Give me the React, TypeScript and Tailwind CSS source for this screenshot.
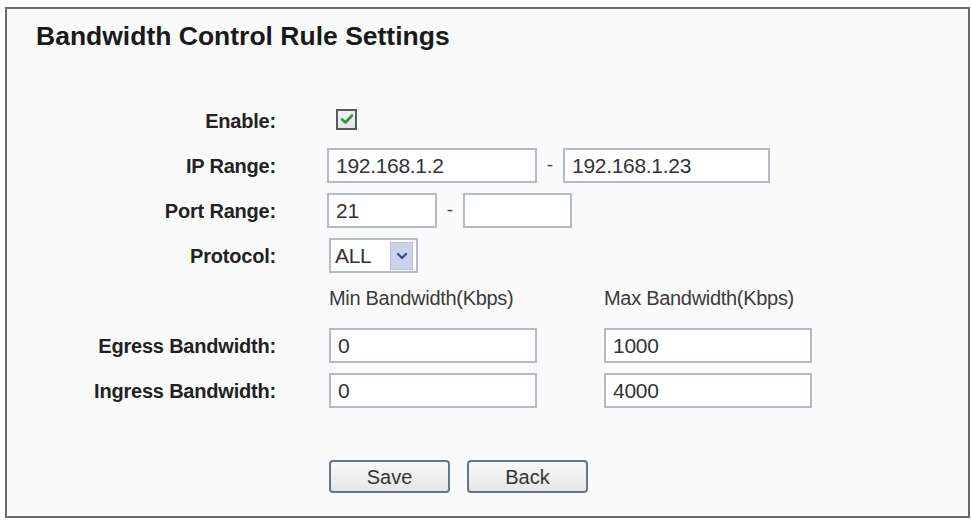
const font = { fontFamily: '"Liberation Sans", Arial, sans-serif' };

const Field = ({ value, width }: { value: string; width: string }) => (
  <div className={`${width} h-[35px] border-2 border-[#b3bbc6] bg-white flex items-center pl-[7px] text-[21px] text-[#333] tracking-[-0.3px]`}>
    {value}
  </div>
);

const Label = ({ children }: { children: string }) => (
  <div className="w-[269px] shrink-0 text-right text-[20px] font-bold text-[#222] tracking-[-0.2px]">{children}</div>
);

const Dash = ({ width }: { width: string }) => (
  <div className={`${width} text-center text-[19px] text-[#444]`}>-</div>
);

const App = () => {
  return (
    <div className="w-[971px] h-[520px] bg-white pt-[7px] pl-[5px]" style={font}>
      <div className="w-[965px] h-[511px] border-2 border-[#6b6b6b] bg-[#fafafa]">
        <h1 className="pl-[29px] pt-[12px] text-[26.5px] leading-[30px] font-bold text-[#1a1a1a]">
          Bandwidth Control Rule Settings
        </h1>

        <div className="mt-[47px]">
          <div className="h-[45px] flex items-center">
            <Label>Enable:</Label>
            <div className="ml-[60px] -mt-[3px] w-[21px] h-[21px] border-2 border-[#5a5a5a] bg-gradient-to-b from-[#eef2f4] to-[#dfe6ea] flex items-center justify-center">
              <svg width="14" height="12" viewBox="0 0 14 12">
                <path d="M2 6.5 L5.5 9.5 L12 2.5" fill="none" stroke="#2f9a2a" strokeWidth="2.6" strokeLinecap="round" strokeLinejoin="round" />
              </svg>
            </div>
          </div>

          <div className="h-[45px] flex items-center">
            <Label>IP Range:</Label>
            <div className="ml-[51px] flex items-center">
              <Field value="192.168.1.2" width="w-[210px]" />
              <Dash width="w-[26px]" />
              <Field value="192.168.1.23" width="w-[207px]" />
            </div>
          </div>

          <div className="h-[45px] flex items-center">
            <Label>Port Range:</Label>
            <div className="ml-[51px] flex items-center">
              <Field value="21" width="w-[110px]" />
              <Dash width="w-[26px]" />
              <Field value="" width="w-[109px]" />
            </div>
          </div>

          <div className="h-[45px] flex items-center">
            <Label>Protocol:</Label>
            <div className="ml-[53px] w-[89px] h-[35px] border-2 border-[#b3bbc6] bg-white flex items-center justify-between pl-[4px] pr-[3px]">
              <span className="text-[21px] text-[#333] tracking-[-0.3px]">ALL</span>
              <div className="w-[23px] h-[28px] bg-[#c9d3ec] border border-[#b4c0e0] flex items-center justify-center">
                <svg width="12" height="8" viewBox="0 0 12 8">
                  <path d="M2 2 L6 6 L10 2" fill="none" stroke="#3e4f8c" strokeWidth="2.4" strokeLinecap="round" strokeLinejoin="round" />
                </svg>
              </div>
            </div>
          </div>

          <div className="h-[45px] flex items-center text-[20px] text-[#3a3a3a] tracking-[-0.3px]">
            <div className="w-[269px] shrink-0" />
            <div className="ml-[53px] w-[275px] -mt-[6px]">Min Bandwidth(Kbps)</div>
            <div className="-mt-[6px]">Max Bandwidth(Kbps)</div>
          </div>

          <div className="h-[45px] flex items-center">
            <Label>Egress Bandwidth:</Label>
            <div className="ml-[53px] flex items-center gap-[67px]">
              <Field value="0" width="w-[208px]" />
              <Field value="1000" width="w-[208px]" />
            </div>
          </div>

          <div className="h-[45px] flex items-center">
            <Label>Ingress Bandwidth:</Label>
            <div className="ml-[53px] flex items-center gap-[67px]">
              <Field value="0" width="w-[208px]" />
              <Field value="4000" width="w-[208px]" />
            </div>
          </div>
        </div>

        <div className="mt-[47px] ml-[322px] flex gap-[17px]">
          <button className="w-[121px] h-[33px] rounded-[4px] border-2 border-[#66768a] bg-gradient-to-b from-[#f8f8f8] to-[#e6e6e6] text-[20px] text-[#333]">
            Save
          </button>
          <button className="w-[121px] h-[33px] rounded-[4px] border-2 border-[#66768a] bg-gradient-to-b from-[#f8f8f8] to-[#e6e6e6] text-[20px] text-[#333]">
            Back
          </button>
        </div>
      </div>
    </div>
  );
};

export default App;
